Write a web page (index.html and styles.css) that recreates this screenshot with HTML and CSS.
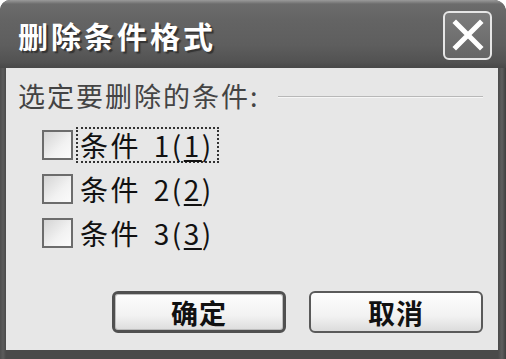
FILE: index.html
```html
<!DOCTYPE html>
<html lang="zh-CN">
<head>
<meta charset="utf-8">
<title>删除条件格式</title>
<link rel="stylesheet" href="styles.css">
</head>
<body>
<div class="window">
  <div class="titlebar">
    <span class="title">删除条件格式</span>
    <button class="close" aria-label="关闭">
      <svg width="32" height="32" viewBox="0 0 32 32"><path d="M4 4 L28 28 M28 4 L4 28" stroke="#fff" stroke-width="5" stroke-linecap="square" fill="none"/></svg>
    </button>
  </div>
  <div class="content">
    <div class="group-head">
      <span class="group-label">选定要删除的条件:</span>
      <span class="group-line"></span>
    </div>
    <div class="options">
      <label class="option"><span class="box"></span><span class="opt-text focus">条件&nbsp;1(<u>1</u>)</span></label>
      <label class="option"><span class="box"></span><span class="opt-text">条件&nbsp;2(<u>2</u>)</span></label>
      <label class="option"><span class="box"></span><span class="opt-text">条件&nbsp;3(<u>3</u>)</span></label>
    </div>
    <div class="buttons">
      <button class="btn default">确定</button>
      <button class="btn">取消</button>
    </div>
  </div>
</div>
</body>
</html>
```

FILE: styles.css
```css
html, body {
  margin: 0;
  padding: 0;
  background: #fff;
}
body {
  font-family: "Noto Sans CJK SC", "Noto Sans", sans-serif;
}
.window {
  width: 506px;
  height: 359px;
  box-sizing: border-box;
  display: flex;
  flex-direction: column;
  background: linear-gradient(to right, #4e4e4e 0, #5c5c5c 3px, #4a4a4a 6px, #4a4a4a 498px, #5e5e5e 502px, #3e3e3e 506px);
  border-radius: 10px 12px 0 0;
  padding: 0 8px 9px 6px;
}
.titlebar {
  height: 68px;
  margin: 0 -8px 0 -6px;
  padding: 0 14px 0 18px;
  border-radius: 10px 12px 0 0;
  background: linear-gradient(to bottom, #9a9a9a 0, #6c6c6c 4px, #646464 20px, #5e5e5e 45px, #525252 62px, #484848 68px);
  display: flex;
  align-items: center;
  justify-content: space-between;
}
.title {
  color: #fff;
  font-size: 30px;
  font-weight: bold;
  letter-spacing: 3px;
  text-shadow: 2px 2px 1px #333;
  margin-top: 2px;
}
.close {
  width: 49px;
  height: 49px;
  box-sizing: border-box;
  border: 2px solid #e6e6e6;
  border-radius: 6px;
  background: linear-gradient(to bottom, #7c7c7c, #666);
  display: flex;
  align-items: center;
  justify-content: center;
  padding: 0;
  margin-top: 2px;
}
.content {
  flex: 1;
  background: #e7e7e7;
  display: flex;
  flex-direction: column;
  padding: 11px 15px 17px 12px;
}
.group-head {
  display: flex;
  align-items: center;
  height: 34px;
}
.group-label {
  font-size: 27px;
  color: #444;
  letter-spacing: 2px;
  line-height: 34px;
}
.group-line {
  flex: 1;
  margin-left: 18px;
  border-top: 1px solid #b8b8b8;
  border-bottom: 1px solid #f6f6f6;
  margin-top: 2px;
}
.options {
  display: flex;
  flex-direction: column;
  gap: 10px;
  padding-left: 24px;
  margin-top: 15px;
}
.option {
  display: flex;
  align-items: center;
  height: 34px;
}
.box {
  width: 31px;
  height: 30px;
  box-sizing: border-box;
  border: 2px solid #6c6c6c;
  background: linear-gradient(135deg, #d4d4d4 0, #f2f2f2 60%, #fbfbfb 100%);
}
.opt-text {
  font-size: 28px;
  color: #111;
  line-height: 32px;
  margin-left: 3px;
  padding: 0 3px 0 2px;
  border: 2px dotted transparent;
  letter-spacing: 2.5px;
  word-spacing: 4px;
}
.opt-text.focus {
  border-color: #333;
}
.opt-text u {
  text-underline-offset: 3px;
}
.buttons {
  margin-top: auto;
  display: flex;
  justify-content: flex-end;
  gap: 23px;
}
.btn {
  width: 174px;
  height: 42px;
  box-sizing: border-box;
  border: 2px solid #5a5a5a;
  border-radius: 6px;
  background: linear-gradient(to bottom, #fdfdfd 0, #f2f2f2 60%, #dcdcdc 100%);
  font-family: "Noto Sans CJK SC", sans-serif;
  font-size: 27px;
  font-weight: bold;
  color: #111;
  line-height: 1;
  padding: 0;
  letter-spacing: 1px;
}
.btn.default {
  border: 3px solid #505050;
  box-shadow: inset 0 0 0 1px #bdbdbd;
}
```
